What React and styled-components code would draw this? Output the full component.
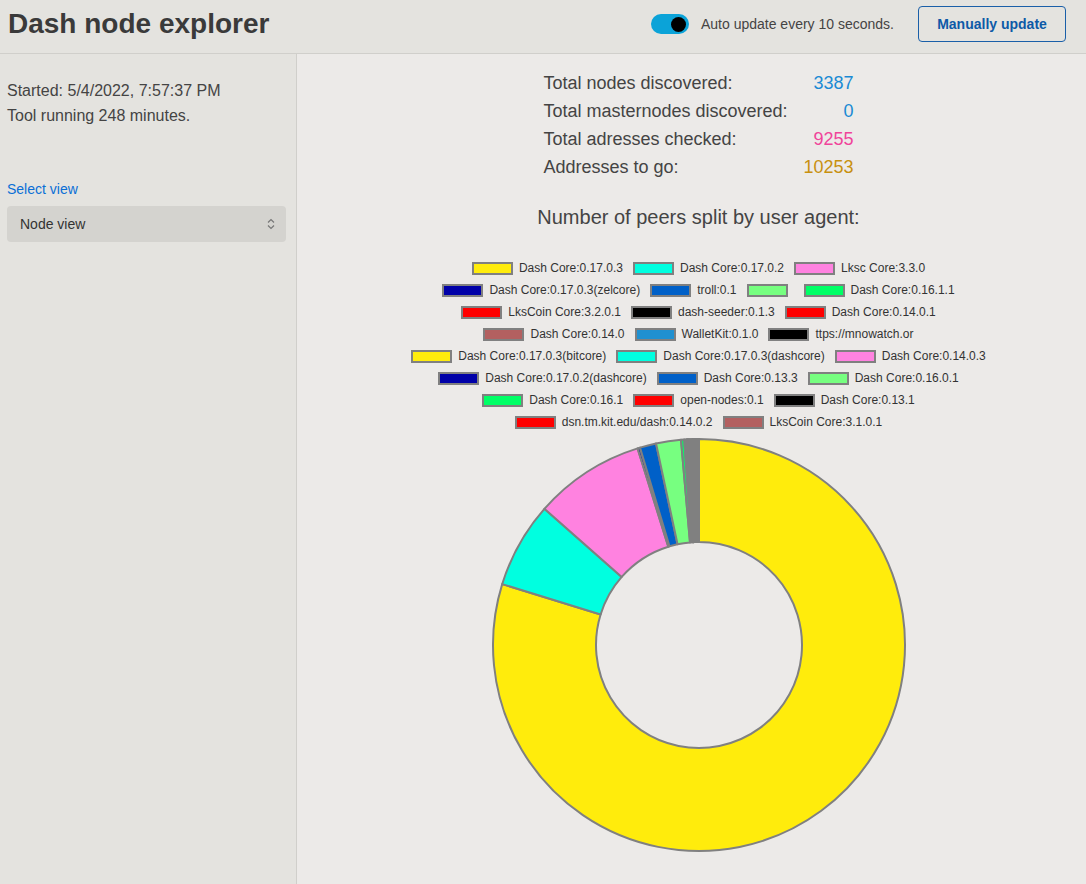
import React from "react";
import styled, { createGlobalStyle } from "styled-components";

const GlobalStyle = createGlobalStyle`
  html, body {
    margin: 0;
    padding: 0;
    background: #eceae8;
    font-family: "Liberation Sans", Arial, sans-serif;
    color: #444;
  }
`;

const Page = styled.div`
  display: flex;
  flex-direction: column;
  min-height: 100vh;
`;

const Header = styled.header`
  display: flex;
  align-items: center;
  padding: 6px 20px 11px 8px;
  background: #e4e3df;
  border-bottom: 1px solid #d0cfcb;
`;

const Title = styled.h1`
  margin: 0;
  font-size: 28px;
  font-weight: bold;
  color: #3a3a3a;
  flex: 1;
`;

const ToggleGroup = styled.label`
  display: flex;
  align-items: center;
  gap: 12px;
  font-size: 14px;
  color: #444;
  margin-right: 24px;
`;

const Toggle = styled.span`
  width: 38px;
  height: 20px;
  border-radius: 10px;
  background: #0ba3d8;
  display: flex;
  align-items: center;
  justify-content: flex-end;
  padding-right: 3px;
  box-sizing: border-box;
`;

const Knob = styled.span`
  width: 15px;
  height: 15px;
  border-radius: 50%;
  background: #000;
`;

const Button = styled.button`
  height: 36px;
  width: 148px;
  border: 1px solid #1a5fa8;
  border-radius: 4px;
  background: transparent;
  color: #0d5aa7;
  font-family: "Liberation Sans", Arial, sans-serif;
  font-size: 14px;
  font-weight: bold;
`;

const Body = styled.div`
  flex: 1;
  display: flex;
`;

const Sidebar = styled.aside`
  width: 297px;
  flex-shrink: 0;
  box-sizing: border-box;
  padding: 24px 10px 0 7px;
  background: #e4e3df;
  border-right: 1px solid #d0cfcb;
`;

const InfoLine = styled.div`
  font-size: 16px;
  line-height: 25px;
  color: #444;
`;

const SelectLabel = styled.div`
  margin-top: 53px;
  font-size: 14px;
  line-height: 17px;
  color: #0a6fd6;
`;

const SelectBox = styled.div`
  margin-top: 8px;
  height: 36px;
  border-radius: 4px;
  background: #d4d3cf;
  display: flex;
  align-items: center;
  justify-content: space-between;
  padding: 0 10px 0 13px;
  font-size: 14px;
  color: #333;
`;

const Main = styled.main`
  flex: 1;
  display: flex;
  flex-direction: column;
  align-items: center;
  padding: 15px 0 0 14px;
`;

const Stats = styled.div`
  display: grid;
  grid-template-columns: auto auto;
  column-gap: 16px;
  font-size: 18px;
  line-height: 28px;
`;

const StatLabel = styled.span`
  color: #444;
`;

const StatValue = styled.span`
  text-align: right;
  color: ${(p) => p.$color};
`;

const ChartTitle = styled.div`
  margin-top: 24px;
  font-size: 20px;
  line-height: 24px;
  color: #444;
`;

const Legend = styled.div`
  margin-top: 28px;
  display: flex;
  flex-direction: column;
`;

const LegendRow = styled.div`
  height: 22px;
  display: flex;
  align-items: center;
  justify-content: center;
  gap: 10px;
`;

const LegendItem = styled.div`
  display: flex;
  align-items: center;
  font-size: 12px;
  color: #333;
`;

const Swatch = styled.span`
  width: 41px;
  height: 13px;
  box-sizing: border-box;
  border: 2px solid #808080;
  background: ${(p) => p.$color};
  margin-right: 6px;
`;

const ChartSvg = styled.svg`
  margin-top: 2px;
  display: block;
`;

const C = {
  yellow: "#ffec0c",
  cyan: "#00ffe0",
  pink: "#ff82e0",
  navy: "#0000a8",
  blue: "#0060c8",
  lime: "#77ff80",
  green: "#00ff66",
  red: "#ff0000",
  black: "#000000",
  brown: "#b36060",
  sky: "#2090d0",
};

const legendRows = [
  [[C.yellow, "Dash Core:0.17.0.3"], [C.cyan, "Dash Core:0.17.0.2"], [C.pink, "Lksc Core:3.3.0"]],
  [[C.navy, "Dash Core:0.17.0.3(zelcore)"], [C.blue, "troll:0.1"], [C.lime, ""], [C.green, "Dash Core:0.16.1.1"]],
  [[C.red, "LksCoin Core:3.2.0.1"], [C.black, "dash-seeder:0.1.3"], [C.red, "Dash Core:0.14.0.1"]],
  [[C.brown, "Dash Core:0.14.0"], [C.sky, "WalletKit:0.1.0"], [C.black, "ttps://mnowatch.or"]],
  [[C.yellow, "Dash Core:0.17.0.3(bitcore)"], [C.cyan, "Dash Core:0.17.0.3(dashcore)"], [C.pink, "Dash Core:0.14.0.3"]],
  [[C.navy, "Dash Core:0.17.0.2(dashcore)"], [C.blue, "Dash Core:0.13.3"], [C.lime, "Dash Core:0.16.0.1"]],
  [[C.green, "Dash Core:0.16.1"], [C.red, "open-nodes:0.1"], [C.black, "Dash Core:0.13.1"]],
  [[C.red, "dsn.tm.kit.edu/dash:0.14.0.2"], [C.brown, "LksCoin Core:3.1.0.1"]],
];

// slice sizes in degrees, clockwise from 12 o'clock, same order as legend
const slices = [
  [C.yellow, 286.4],
  [C.cyan, 24.1],
  [C.pink, 31.2],
  [C.navy, 0.7],
  [C.blue, 4.6],
  [C.lime, 7.0],
  [C.green, 0.9],
  [C.red, 0.5],
  [C.black, 0.25],
  [C.red, 0.25],
  [C.brown, 0.25],
  [C.sky, 0.25],
  [C.black, 0.25],
  [C.yellow, 0.25],
  [C.cyan, 0.25],
  [C.pink, 0.25],
  [C.navy, 0.2],
  [C.blue, 0.2],
  [C.lime, 0.2],
  [C.green, 0.2],
  [C.red, 0.2],
  [C.black, 0.2],
  [C.red, 0.2],
  [C.brown, 0.2],
];

const CX = 210;
const CY = 210;
const R = 206;
const r = 103;

const pt = (rad, deg) => {
  const a = ((deg - 90) * Math.PI) / 180;
  return `${(CX + rad * Math.cos(a)).toFixed(2)} ${(CY + rad * Math.sin(a)).toFixed(2)}`;
};

const arcPath = (start, end) => {
  const large = end - start > 180 ? 1 : 0;
  return [
    `M ${pt(R, start)}`,
    `A ${R} ${R} 0 ${large} 1 ${pt(R, end)}`,
    `L ${pt(r, end)}`,
    `A ${r} ${r} 0 ${large} 0 ${pt(r, start)}`,
    "Z",
  ].join(" ");
};

const Doughnut = () => {
  const total = slices.reduce((s, x) => s + x[1], 0);
  let acc = 0;
  return (
    <ChartSvg width="420" height="420" viewBox="0 0 420 420">
      {slices.map(([color, v], i) => {
        const start = (acc / total) * 360;
        acc += v;
        const end = (acc / total) * 360;
        return (
          <path
            key={i}
            d={arcPath(start, end)}
            fill={color}
            stroke="#808080"
            strokeWidth="2"
            strokeLinejoin="round"
          />
        );
      })}
    </ChartSvg>
  );
};

const Chevrons = () => (
  <svg width="10" height="14" viewBox="0 0 10 14">
    <path d="M2 5.5 L5 2.5 L8 5.5 M2 8.5 L5 11.5 L8 8.5" fill="none" stroke="#777" strokeWidth="1.2" />
  </svg>
);

export default function App() {
  return (
    <Page>
      <GlobalStyle />
      <Header>
        <Title>Dash node explorer</Title>
        <ToggleGroup>
          <Toggle>
            <Knob />
          </Toggle>
          Auto update every 10 seconds.
        </ToggleGroup>
        <Button>Manually update</Button>
      </Header>
      <Body>
        <Sidebar>
          <InfoLine>Started: 5/4/2022, 7:57:37 PM</InfoLine>
          <InfoLine>Tool running 248 minutes.</InfoLine>
          <SelectLabel>Select view</SelectLabel>
          <SelectBox>
            Node view
            <Chevrons />
          </SelectBox>
        </Sidebar>
        <Main>
          <Stats>
            <StatLabel>Total nodes discovered:</StatLabel>
            <StatValue $color="#1a8ad4">3387</StatValue>
            <StatLabel>Total masternodes discovered:</StatLabel>
            <StatValue $color="#1a8ad4">0</StatValue>
            <StatLabel>Total adresses checked:</StatLabel>
            <StatValue $color="#f0449a">9255</StatValue>
            <StatLabel>Addresses to go:</StatLabel>
            <StatValue $color="#c8900f">10253</StatValue>
          </Stats>
          <ChartTitle>Number of peers split by user agent:</ChartTitle>
          <Legend>
            {legendRows.map((row, i) => (
              <LegendRow key={i}>
                {row.map(([color, label], j) => (
                  <LegendItem key={j}>
                    <Swatch $color={color} />
                    {label}
                  </LegendItem>
                ))}
              </LegendRow>
            ))}
          </Legend>
          <Doughnut />
        </Main>
      </Body>
    </Page>
  );
}
